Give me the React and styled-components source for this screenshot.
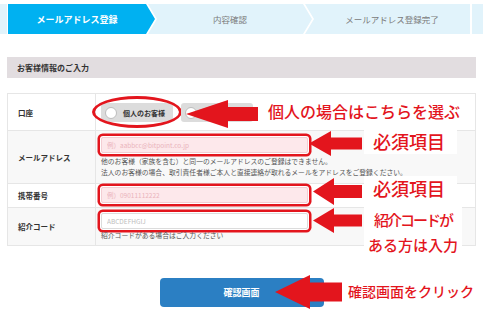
import styled, { createGlobalStyle } from 'styled-components';

const GlobalStyle = createGlobalStyle`
  body {
    margin: 0;
    background: #fff;
    font-family: "Noto Sans CJK JP", "Noto Sans", sans-serif;
  }
`;

const RED = '#e3151d';

const Arrow = ({ x, y, w, h, head, shaft }) => {
  const top = (h - shaft) / 2;
  const bottom = (h + shaft) / 2;
  return (
    <ArrowSvg $x={x} $y={y} width={w} height={h} viewBox={`0 0 ${w} ${h}`}>
      <polygon
        points={`0,${h / 2} ${head},0 ${head},${top} ${w},${top} ${w},${bottom} ${head},${bottom} ${head},${h}`}
        fill={RED}
      />
    </ArrowSvg>
  );
};

const App = () => {
  return (
    <Page>
      <GlobalStyle />
      <StepBar>
        <StepEdge />
        <Step $kind="first" $active>メールアドレス登録</Step>
        <Step $kind="middle">内容確認</Step>
        <Step $kind="last">メールアドレス登録完了</Step>
        <StepEdge $tail />
      </StepBar>

      <Section>
        <SectionHeader>お客様情報のご入力</SectionHeader>
        <Table>
          <Row>
            <Label>口座</Label>
            <Value $pad="9px 0 8px 5px">
              <Radios>
                <Pill>
                  <Circle />
                  個人のお客様
                  <Ellipse />
                </Pill>
                <Pill>
                  <Circle />
                  法人のお客様
                </Pill>
              </Radios>
            </Value>
          </Row>
          <Row $shade>
            <Label>メールアドレス</Label>
            <Value $pad="6px 0 5px 5px">
              <Field $pink $marked placeholder="例）aabbcc@bitpoint.co.jp" />
              <Help $top="3px">他のお客様（家族を含む）と同一のメールアドレスのご登録はできません。</Help>
              <Help>法人のお客様の場合、取引責任者様ご本人と直接連絡が取れるメールをアドレスをご登録ください。</Help>
            </Value>
          </Row>
          <Row>
            <Label>携帯番号</Label>
            <Value $pad="3px 0 4px 5px">
              <Field $pink $marked placeholder="例）09011112222" />
            </Value>
          </Row>
          <Row $shade $last>
            <Label>紹介コード</Label>
            <Value $pad="5px 0 4px 5px">
              <Field $marked placeholder="ABCDEFHGIJ" />
              <Help $top="1px">紹介コードがある場合はご入力ください</Help>
            </Value>
          </Row>
        </Table>
      </Section>

      <ButtonRow>
        <SubmitButton>確認画面</SubmitButton>
      </ButtonRow>

      <Arrow x={186} y={100} w={72} h={28} head={42} shaft={14} />
      <Arrow x={309} y={131} w={53} h={25} head={22} shaft={12} />
      <Arrow x={313} y={178} w={49} h={27} head={21} shaft={13} />
      <Arrow x={313} y={208} w={49} h={25} head={21} shaft={12} />
      <Arrow x={275} y={275} w={67} h={34} head={35} shaft={19} />

      <Callout $x={264} $y={99} $size={16} $pad="0 6px 0 4px">個人の場合はこちらを選ぶ</Callout>
      <Callout $x={364} $y={129} $size={18} $pad="0 12px 0 9px">必須項目</Callout>
      <Callout $x={364} $y={176} $size={18} $pad="0 12px 0 9px">必須項目</Callout>
      <Callout $x={364} $y={207} $size={15} $pad="0 4px" $center>
        <Condensed>紹介コードが</Condensed>
        <br />
        ある方は入力
      </Callout>
      <Callout $x={346} $y={281} $size={14} $pad="0 2px" $line={20}>確認画面をクリック</Callout>
    </Page>
  );
};

export default App;

const Page = styled.div`
  position: relative;
  width: 483px;
  height: 313px;
  overflow: hidden;
  background: #fff;
  padding-top: 4px;
  box-sizing: border-box;
`;

const StepBar = styled.div`
  display: flex;
  height: 30px;
`;

const StepEdge = styled.div`
  background: #e1f3fb;
  width: ${(p) => (p.$tail ? 'auto' : '7px')};
  flex: ${(p) => (p.$tail ? 1 : 'none')};
  margin-left: ${(p) => (p.$tail ? '2px' : '0')};
`;

const clips = {
  first: 'polygon(0 0, calc(100% - 9px) 0, 100% 50%, calc(100% - 9px) 100%, 0 100%)',
  middle: 'polygon(0 0, calc(100% - 9px) 0, 100% 50%, calc(100% - 9px) 100%, 0 100%, 9px 50%)',
  last: 'polygon(0 0, 100% 0, 100% 100%, 0 100%, 9px 50%)',
};

const Step = styled.div`
  display: flex;
  align-items: center;
  justify-content: center;
  box-sizing: border-box;
  width: ${(p) => (p.$kind === 'first' ? '147px' : p.$kind === 'middle' ? '164px' : '165px')};
  margin-left: ${(p) => (p.$kind === 'first' ? '1px' : '-7px')};
  padding-left: ${(p) => (p.$kind === 'first' ? '0' : '9px')};
  padding-right: ${(p) => (p.$kind === 'last' ? '0' : '9px')};
  clip-path: ${(p) => clips[p.$kind]};
  background: ${(p) => (p.$active ? '#00b1f1' : '#e1f3fb')};
  color: ${(p) => (p.$active ? '#fff' : '#7a7a7a')};
  font-size: ${(p) => (p.$active ? '9px' : '8.5px')};
  font-weight: ${(p) => (p.$active ? 700 : 400)};
`;

const Section = styled.div`
  margin: 23px 7px 0;
`;

const SectionHeader = styled.div`
  height: 21px;
  line-height: 21px;
  background: #e2dde0;
  padding-left: 10px;
  font-size: 8px;
  font-weight: 700;
  color: #333;
`;

const Table = styled.div`
  margin-top: 15px;
  border: 1px solid #e6e6e6;
  border-bottom: none;
`;

const Row = styled.div`
  display: grid;
  grid-template-columns: 88px 1fr;
  background: ${(p) => (p.$shade ? '#f8f8f8' : '#fff')};
  border-bottom: 1px solid #e6e6e6;
`;

const Label = styled.div`
  display: flex;
  align-items: center;
  padding-left: 10px;
  font-size: 7.5px;
  font-weight: 700;
  color: #333;
  border-right: 1px solid #e6e6e6;
`;

const Value = styled.div`
  padding: ${(p) => p.$pad};
`;

const Radios = styled.div`
  display: flex;
  gap: 8px;
`;

const Pill = styled.div`
  position: relative;
  display: flex;
  align-items: center;
  gap: 6px;
  height: 19px;
  padding: 0 8px 0 4px;
  border-radius: 3px;
  background: #dcdcdc;
  font-size: 7px;
  font-weight: 700;
  color: #333;
`;

const Circle = styled.span`
  width: 10px;
  height: 10px;
  border-radius: 50%;
  background: #fff;
  border: 1px solid #bdbdbd;
`;

const Ellipse = styled.span`
  position: absolute;
  left: -9px;
  right: -9px;
  top: -7px;
  bottom: -6px;
  border: 3px solid ${RED};
  border-radius: 50%;
`;

const Field = styled.input`
  display: block;
  box-sizing: border-box;
  width: 207px;
  height: 16px;
  margin: 0;
  padding: 0 5px;
  font-family: inherit;
  font-size: 6.5px;
  border: 1px solid ${(p) => (p.$pink ? '#f3cdd2' : '#dcdcdc')};
  border-radius: 2px;
  background: ${(p) => (p.$pink ? '#fde8eb' : '#fff')};
  box-shadow: ${(p) => (p.$marked ? `0 0 0 1px #fff, 0 0 0 3.5px ${RED}` : 'none')};
  &::placeholder {
    color: ${(p) => (p.$pink ? '#eab3bb' : '#bdbdbd')};
  }
`;

const Help = styled.div`
  margin-top: ${(p) => p.$top || '0'};
  font-size: 6.8px;
  line-height: 11px;
  color: #555;
  white-space: nowrap;
`;

const ButtonRow = styled.div`
  display: flex;
  justify-content: center;
  margin-top: 32px;
`;

const SubmitButton = styled.button`
  width: 164px;
  height: 29px;
  border: none;
  border-radius: 4px;
  background: #2b7fc3;
  color: #fff;
  font-family: inherit;
  font-size: 9px;
  font-weight: 700;
`;

const ArrowSvg = styled.svg`
  position: absolute;
  left: ${(p) => p.$x}px;
  top: ${(p) => p.$y}px;
`;

const Callout = styled.div`
  position: absolute;
  left: ${(p) => p.$x}px;
  top: ${(p) => p.$y}px;
  padding: ${(p) => p.$pad};
  background: #fff;
  color: ${RED};
  font-size: ${(p) => p.$size}px;
  line-height: ${(p) => p.$line || 25}px;
  font-weight: 500;
  white-space: nowrap;
  text-align: ${(p) => (p.$center ? 'center' : 'left')};
`;

const Condensed = styled.span`
  letter-spacing: -2px;
`;
